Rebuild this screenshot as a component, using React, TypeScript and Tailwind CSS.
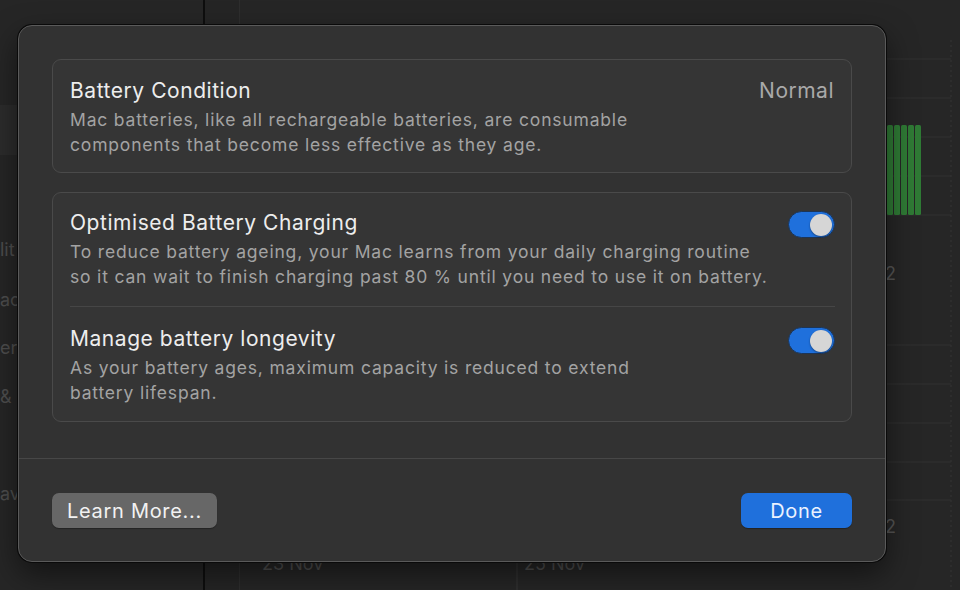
import React from "react";

const FONT = { fontFamily: "Inter, 'Noto Sans', 'Liberation Sans', sans-serif" };

function Toggle({ on }: { on: boolean }) {
  return (
    <div
      className={
        "w-[47px] h-[27px] rounded-full border border-[#1c3557] flex items-center px-[2px] shrink-0 " +
        (on ? "bg-[#1f70dc] justify-end" : "bg-[#4a4a4a] justify-start")
      }
    >
      <div className="w-[22px] h-[22px] rounded-full bg-[#d6d6d6] shadow-[0_1px_2px_rgba(0,0,0,0.4)]" />
    </div>
  );
}

function SettingRow({
  title,
  lines,
  on,
  className,
}: {
  title: string;
  lines: string[];
  on: boolean;
  className?: string;
}) {
  return (
    <div className={"flex items-start justify-between " + (className ?? "")}>
      <div>
        <div className="text-[21px] leading-[26px] tracking-[0.55px] text-[#ededed]">{title}</div>
        <div className="mt-[3px] text-[17.5px] leading-[25px] tracking-[0.82px] text-[#a3a3a3]">
          {lines.map((l) => (
            <div key={l}>{l}</div>
          ))}
        </div>
      </div>
      <div className="pt-[1px]">
        <Toggle on={on} />
      </div>
    </div>
  );
}

function BackgroundChart() {
  const topLines = [59, 98, 137, 176, 215];
  const lowLines = [345, 384, 423, 462, 500];
  return (
    <svg width="719" height="590" viewBox="241 0 719 590" className="block">
      {topLines.map((y) => (
        <line key={y} x1="241" x2="952" y1={y} y2={y} stroke="#303030" strokeWidth="1" />
      ))}
      {lowLines.map((y) => (
        <line key={y} x1="241" x2="952" y1={y} y2={y} stroke="#303030" strokeWidth="1" />
      ))}
      {[888, 895, 902, 909, 916].map((x) => (
        <rect key={x} x={x} y="125" width="6" height="90" rx="1.5" fill="#2f7a35" />
      ))}
      <line x1="952" x2="952" y1="40" y2="590" stroke="#353535" strokeDasharray="2 3" />
      <line x1="518" x2="518" y1="540" y2="590" stroke="#363636" />
      <text x="886" y="280" fill="#555" fontSize="18" fontFamily="Inter, sans-serif">2</text>
      <text x="886" y="533" fill="#555" fontSize="18" fontFamily="Inter, sans-serif">2</text>
      <text x="263" y="570" fill="#4f4f4f" fontSize="18" fontFamily="Inter, sans-serif">23 Nov</text>
      <text x="525" y="570" fill="#4f4f4f" fontSize="18" fontFamily="Inter, sans-serif">25 Nov</text>
    </svg>
  );
}

export default function App() {
  return (
    <div className="relative w-[960px] h-[590px] overflow-hidden bg-[#232323]" style={FONT}>
      {/* app behind the sheet */}
      <div className="flex h-full">
        <div className="w-[203px] h-full bg-[#262626] flex flex-col text-[18px] text-[#4e4e4e]">
          <div className="h-[105px]" />
          <div className="h-[50px] bg-[#2c2c2c]" />
          <div className="mt-[83px] leading-[24px]">lit</div>
          <div className="mt-[26px] leading-[24px]">ac</div>
          <div className="mt-[24px] leading-[24px]">er</div>
          <div className="mt-[25px] leading-[24px]">&amp;</div>
          <div className="mt-[73px] leading-[24px]">av</div>
        </div>
        <div className="w-[2px] h-full bg-[#0e0e0e]" />
        <div className="w-[35px] h-full bg-[#252525] border-r border-[#2e2e2e]" />
        <div className="flex-1 h-full bg-[#262626] overflow-hidden">
          <BackgroundChart />
        </div>
      </div>

      {/* sheet */}
      <div className="absolute left-[18px] top-[25px] w-[868px] h-[537px] rounded-[14px] bg-[#323232] border border-[#5a5a5a] shadow-[0_0_0_1px_#0a0a0a,0_12px_30px_rgba(0,0,0,0.5)] flex flex-col">
        <div className="px-[33px] pt-[33px]">
          <div className="rounded-[9px] border border-[#4a4a4a] bg-[#353535] pl-[17px] pr-[17px] pt-[18px] pb-[15px] flex items-start justify-between">
            <div>
              <div className="text-[21px] leading-[26px] tracking-[0.55px] text-[#ededed]">Battery Condition</div>
              <div className="mt-[3px] text-[17.5px] leading-[25px] tracking-[0.82px] text-[#a3a3a3]">
                <div>Mac batteries, like all rechargeable batteries, are consumable</div>
                <div>components that become less effective as they age.</div>
              </div>
            </div>
            <div className="text-[21px] leading-[26px] tracking-[0.5px] text-[#a9a9a9]">Normal</div>
          </div>

          <div className="mt-[19px] rounded-[9px] border border-[#4a4a4a] bg-[#353535] px-[17px] pr-[16px]">
            <SettingRow
              className="pt-[17px] pb-[17px] border-b border-[#464646]"
              title="Optimised Battery Charging"
              lines={[
                "To reduce battery ageing, your Mac learns from your daily charging routine",
                "so it can wait to finish charging past 80 % until you need to use it on battery.",
              ]}
              on
            />
            <SettingRow
              className="pt-[19px] pb-[16px]"
              title="Manage battery longevity"
              lines={[
                "As your battery ages, maximum capacity is reduced to extend",
                "battery lifespan.",
              ]}
              on
            />
          </div>
        </div>

        <div className="mt-[36px] border-t border-[#474747]" />

        <div className="flex items-center justify-between px-[33px] pt-[34px]">
          <button className="h-[35px] w-[165px] rounded-[7px] bg-[#676767] text-[20px] tracking-[0.7px] text-[#f2f2f2] flex items-center justify-center shadow-[0_1px_1px_rgba(0,0,0,0.3)]">
            Learn More...
          </button>
          <button className="h-[35px] w-[111px] rounded-[7px] bg-[#1f70dc] text-[20px] tracking-[0.7px] text-[#eaf2ff] flex items-center justify-center shadow-[0_1px_1px_rgba(0,0,0,0.3)]">
            Done
          </button>
        </div>
      </div>
    </div>
  );
}
